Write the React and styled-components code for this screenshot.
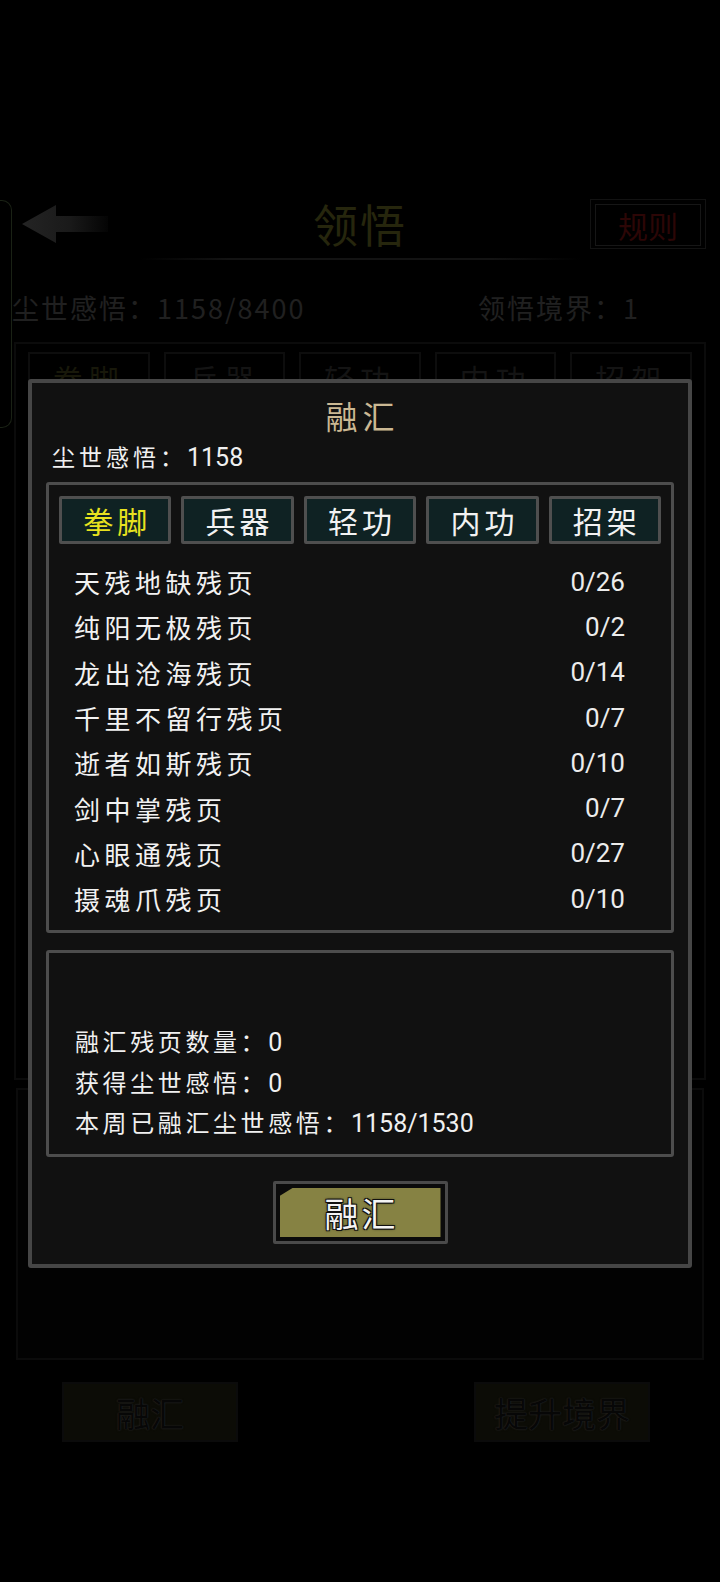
import React from 'react'
import styled, {createGlobalStyle} from 'styled-components'

const GlobalStyle = createGlobalStyle`
  html, body {
    margin: 0;
    padding: 0;
    background: #000;
  }
  body {
    font-family: "Noto Sans CJK SC", "Noto Sans", sans-serif;
  }
`;

const NUM = `Roboto, "Noto Sans CJK SC", sans-serif`;

const Page = styled.div`
    position: relative;
    width: 720px;
    height: 1582px;
    overflow: hidden;
    background: #000;
`;

/* ---- dimmed page behind the dialog ---- */

const Backdrop = styled.div`
    padding-top: 198px;
`;

const Header = styled.div`
    display: grid;
    grid-template-columns: 1fr auto 1fr;
    align-items: center;
    height: 52px;
`;

const BackButton = styled.div`
    margin-left: 20px;
    display: flex;
    align-items: center;
`;

const PageTitle = styled.div`
    font-size: 45px;
    line-height: 52px;
    color: #26260d;
    letter-spacing: 2px;
`;

const RuleButton = styled.div`
    justify-self: end;
    margin-right: 14px;
    width: 116px;
    height: 50px;
    border: 1px solid #121212;
    box-sizing: border-box;
    padding: 4px;
`;

const RuleInner = styled.div`
    height: 100%;
    border: 1px solid #161616;
    display: flex;
    align-items: center;
    justify-content: center;
    font-size: 30px;
    color: #2c0606;
`;

const TitleLine = styled.div`
    width: 440px;
    height: 2px;
    margin: 8px auto 0;
    background: linear-gradient(90deg, transparent, #131313 20%, #131313 80%, transparent);
`;

const StatsRow = styled.div`
    display: flex;
    justify-content: space-between;
    padding: 0 80px 0 12px;
    margin-top: 30px;
    height: 36px;
    line-height: 36px;
    font-size: 27px;
    letter-spacing: 2px;
    color: #202020;
`;

const MainPanel = styled.div`
    margin: 16px 14px 0;
    height: 738px;
    border: 2px solid #0b0b0b;
    padding: 8px 12px;
    box-sizing: border-box;
`;

const FaintTabs = styled.div`
    display: grid;
    grid-template-columns: repeat(5, 1fr);
    gap: 14px;
`;

const FaintTab = styled.div`
    height: 48px;
    border: 2px solid #0d0d0d;
    display: flex;
    align-items: center;
    justify-content: center;
    font-size: 30px;
    letter-spacing: 6px;
    color: ${p => (p.$active ? '#18180a' : '#141414')};
`;

const LowerPanel = styled.div`
    margin: 8px 16px 0;
    height: 272px;
    border: 2px solid #0b0b0b;
    background: #020202;
    box-sizing: border-box;
`;

const BottomBar = styled.div`
    display: flex;
    justify-content: space-between;
    padding: 0 70px 0 62px;
    margin-top: 22px;
`;

const FaintButton = styled.div`
    width: 176px;
    height: 60px;
    border: 2px solid #0b0b0b;
    background: #0c0c06;
    box-sizing: border-box;
    display: flex;
    align-items: center;
    justify-content: center;
    font-size: 34px;
    color: #070707;
    text-shadow: 0 0 2px #262626, 0 0 1px #262626;
`;

const SideHandle = styled.div`
    position: absolute;
    left: 0;
    top: 200px;
    width: 11px;
    height: 226px;
    border: 1px solid #1a2215;
    border-left: none;
    border-radius: 0 10px 10px 0;
`;

/* ---- dialog ---- */

const Dialog = styled.div`
    position: absolute;
    top: 379px;
    left: 28px;
    width: 664px;
    box-sizing: border-box;
    border: 4px solid #464646;
    border-radius: 3px;
    background: #111;
    padding: 10px 14px 20px;
`;

const DialogTitle = styled.div`
    text-align: center;
    font-size: 32px;
    line-height: 44px;
    letter-spacing: 5px;
    padding-left: 5px;
    color: #cbb893;
`;

const Balance = styled.div`
    margin-top: 4px;
    padding-left: 6px;
    height: 30px;
    line-height: 30px;
    font-size: 23px;
    letter-spacing: 4px;
    color: #f0f0f0;
    display: flex;
    align-items: baseline;
`;

const Num = styled.span`
    font-family: ${NUM};
    font-size: ${p => p.$size || 25}px;
    letter-spacing: 0;
`;

const Panel = styled.div`
    border: 3px solid #4d4d4d;
    border-radius: 3px;
    margin-top: ${p => p.$mt}px;
    padding: ${p => p.$pad};
`;

const Tabs = styled.div`
    display: grid;
    grid-template-columns: repeat(5, 1fr);
    gap: 10px;
`;

const Tab = styled.div`
    height: 48px;
    box-sizing: border-box;
    border: 3px solid #4f4f4f;
    border-radius: 2px;
    background: #0f2223;
    display: flex;
    align-items: center;
    justify-content: center;
    font-size: 30px;
    letter-spacing: 4px;
    padding-left: 4px;
    color: ${p => (p.$active ? '#e8e21f' : '#f2f2f2')};
`;

const List = styled.div`
    margin-top: 15px;
    padding: 0 36px 0 15px;
`;

const Row = styled.div`
    display: flex;
    justify-content: space-between;
    align-items: center;
    height: 45.3px;
`;

const Name = styled.span`
    font-size: 26px;
    letter-spacing: 4.5px;
    color: #f2f2f2;
`;

const Count = styled.span`
    font-family: ${NUM};
    font-size: 26px;
    color: #ececec;
`;

const InfoLine = styled.div`
    height: 40.5px;
    line-height: 40.5px;
    font-size: 24px;
    letter-spacing: 3.6px;
    color: #f0f0f0;
    display: flex;
    align-items: baseline;
`;

const Actions = styled.div`
    display: flex;
    justify-content: center;
    margin-top: 24px;
`;

const ActionFrame = styled.div`
    width: 175px;
    height: 63px;
    box-sizing: border-box;
    border: 3px solid #4a4a4a;
    border-radius: 2px;
    background: #0b0b0b;
    padding: 4px;
`;

const ActionFace = styled.div`
    height: 100%;
    background: #868243;
    clip-path: polygon(13px 0, 100% 0, 100% 100%, 0 100%, 0 8px);
    display: flex;
    align-items: center;
    justify-content: center;
    font-size: 34px;
    letter-spacing: 3px;
    padding-left: 3px;
    color: #f4f4f4;
    text-shadow: -1px -1px 0 #111, 1px -1px 0 #111, -1px 1px 0 #111, 1px 1px 0 #111, 0 0 3px #000;
`;

const tabs = ['拳脚', '兵器', '轻功', '内功', '招架'];

const pages = [
    ['天残地缺残页', '0/26'],
    ['纯阳无极残页', '0/2'],
    ['龙出沧海残页', '0/14'],
    ['千里不留行残页', '0/7'],
    ['逝者如斯残页', '0/10'],
    ['剑中掌残页', '0/7'],
    ['心眼通残页', '0/27'],
    ['摄魂爪残页', '0/10'],
];

function BackArrow() {
    return (
        <svg width="90" height="42" viewBox="0 0 90 42">
            <defs>
                <linearGradient id="arrowFade" x1="0" x2="1" y1="0" y2="0">
                    <stop offset="0" stopColor="#242424"/>
                    <stop offset="0.55" stopColor="#1a1a1a"/>
                    <stop offset="1" stopColor="#040404"/>
                </linearGradient>
            </defs>
            <path d="M2 21 L36 2 L36 13 L88 13 L88 29 L36 29 L36 40 Z" fill="url(#arrowFade)"/>
        </svg>
    );
}

export default function App() {
    return (
        <Page>
            <GlobalStyle/>
            <Backdrop>
                <Header>
                    <BackButton><BackArrow/></BackButton>
                    <PageTitle>领悟</PageTitle>
                    <RuleButton><RuleInner>规则</RuleInner></RuleButton>
                </Header>
                <TitleLine/>
                <StatsRow>
                    <span>尘世感悟：1158/8400</span>
                    <span>领悟境界：1</span>
                </StatsRow>
                <MainPanel>
                    <FaintTabs>
                        {tabs.map((t, i) => <FaintTab key={t} $active={i === 0}>{t}</FaintTab>)}
                    </FaintTabs>
                </MainPanel>
                <LowerPanel/>
                <BottomBar>
                    <FaintButton>融汇</FaintButton>
                    <FaintButton>提升境界</FaintButton>
                </BottomBar>
            </Backdrop>
            <SideHandle/>

            <Dialog>
                <DialogTitle>融汇</DialogTitle>
                <Balance>尘世感悟：<Num>1158</Num></Balance>

                <Panel $mt={11} $pad="11px 10px 9px">
                    <Tabs>
                        {tabs.map((t, i) => <Tab key={t} $active={i === 0}>{t}</Tab>)}
                    </Tabs>
                    <List>
                        {pages.map(([name, count]) => (
                            <Row key={name}>
                                <Name>{name}</Name>
                                <Count>{count}</Count>
                            </Row>
                        ))}
                    </List>
                </Panel>

                <Panel $mt={17} $pad="68px 26px 11px">
                    <InfoLine>融汇残页数量：<Num $size={25}>0</Num></InfoLine>
                    <InfoLine>获得尘世感悟：<Num $size={25}>0</Num></InfoLine>
                    <InfoLine>本周已融汇尘世感悟：<Num $size={25}>1158/1530</Num></InfoLine>
                </Panel>

                <Actions>
                    <ActionFrame>
                        <ActionFace>融汇</ActionFace>
                    </ActionFrame>
                </Actions>
            </Dialog>
        </Page>
    );
}
